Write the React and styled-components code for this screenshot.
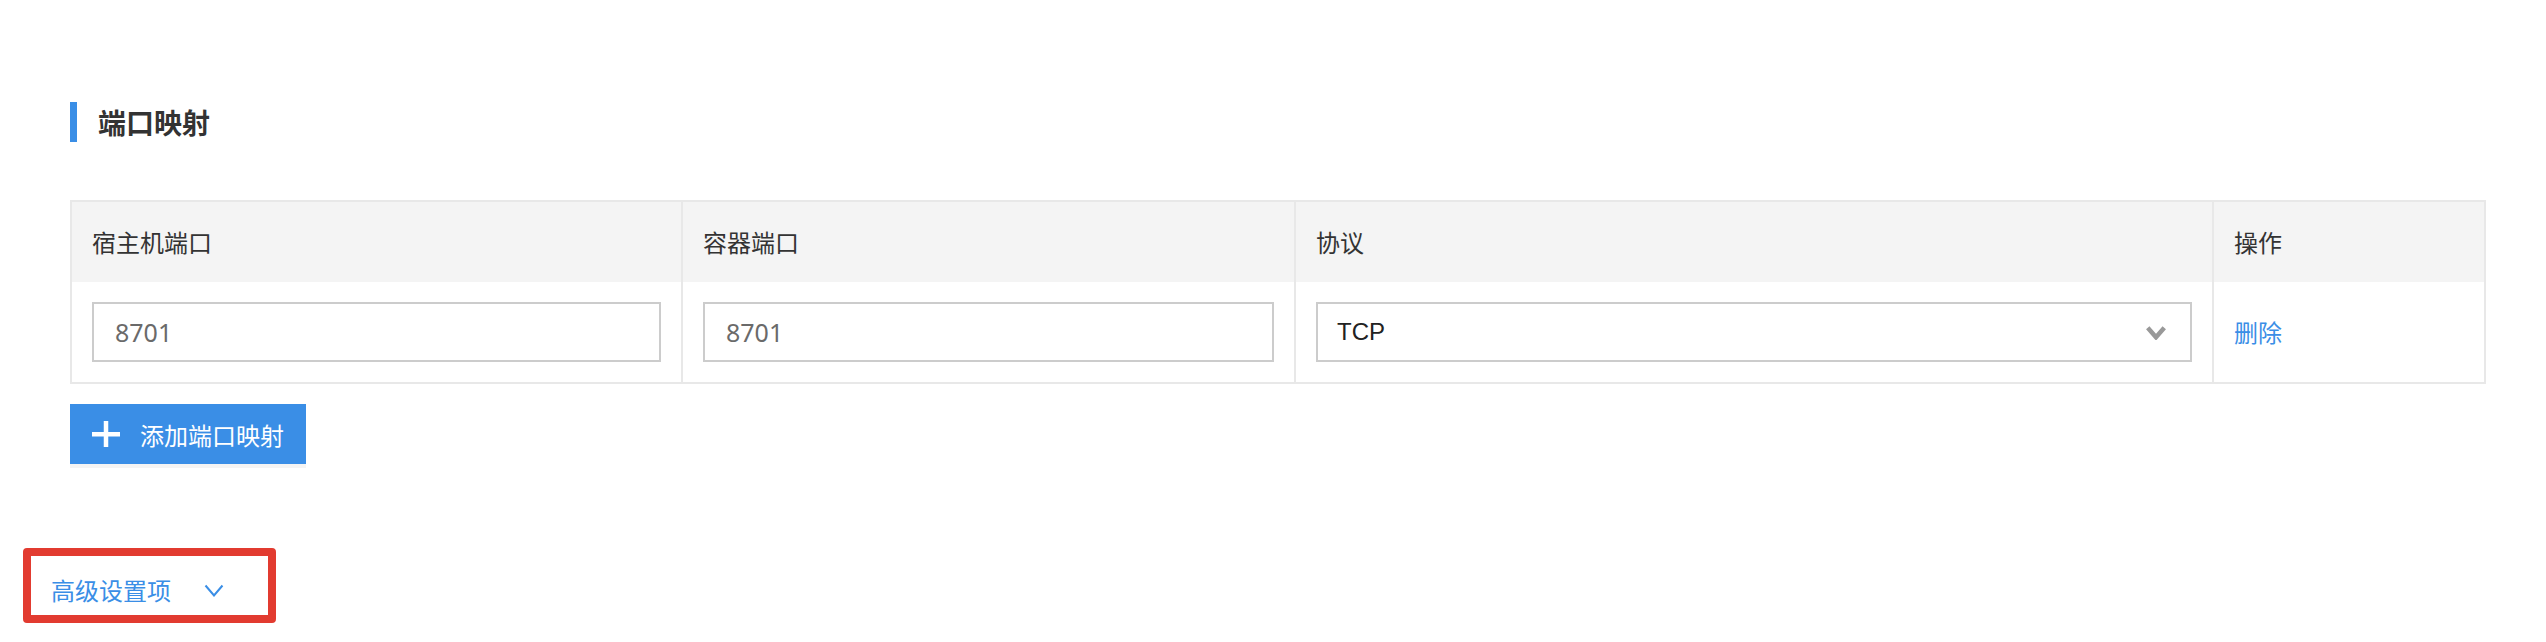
import React from "react";
import styled, { createGlobalStyle } from "styled-components";

const Global = createGlobalStyle`
  html, body { margin: 0; padding: 0; background: #fff; }
  body { font-family: "Noto Sans CJK SC", "Liberation Sans", sans-serif; color: #333; }
  * { box-sizing: border-box; }
`;

const Page = styled.div`
  width: 2546px;
  height: 642px;
  display: flex;
  flex-direction: column;
  overflow: hidden;
`;

const Content = styled.div`
  padding: 102px 60px 0 70px;
  display: flex;
  flex-direction: column;
`;

const SectionTitle = styled.div`
  display: flex;
  align-items: center;
  height: 40px;
  gap: 21px;
  font-size: 28px;
  line-height: 40px;
  font-weight: 700;
  color: #333;
`;

const TitleBar = styled.span`
  width: 7px;
  height: 40px;
  background: #3a8ee6;
`;

const Table = styled.div`
  margin-top: 58px;
  border: 2px solid #e8e8e8;
  display: grid;
  grid-template-columns: 611px 613px 918px 1fr;
`;

const HeadCell = styled.div`
  height: 80px;
  background: #f4f4f4;
  padding: 0 20px;
  display: flex;
  align-items: center;
  font-size: 24px;
  line-height: 30px;
  color: #333;
  border-right: ${(p) => (p.$last ? "none" : "2px solid #e8e8e8")};
`;

const BodyCell = styled.div`
  height: 100px;
  padding: 20px 20px;
  display: flex;
  align-items: center;
  border-right: ${(p) => (p.$last ? "none" : "2px solid #e8e8e8")};
`;

const TextInput = styled.div`
  width: 100%;
  height: 60px;
  border: 2px solid #cccccc;
  padding: 0 21px;
  display: flex;
  align-items: center;
  font-family: "Noto Sans", "Liberation Sans", sans-serif;
  font-size: 25px;
  color: #6a6a6a;
  background: #fff;
`;

const Select = styled(TextInput)`
  justify-content: space-between;
  padding: 0 23px 0 19px;
  font-family: "Liberation Sans", Arial, sans-serif;
  font-size: 24px;
  color: #222;
`;

const LinkText = styled.span`
  font-size: 24px;
  line-height: 30px;
  color: #3a8ee6;
  cursor: pointer;
`;

const AddButton = styled.button`
  margin-top: 20px;
  align-self: flex-start;
  width: 236px;
  height: 60px;
  border: none;
  background: #3a8ee6;
  color: #fff;
  display: flex;
  align-items: center;
  gap: 20px;
  padding: 0 0 0 22px;
  font-family: "Noto Sans CJK SC", sans-serif;
  font-size: 24px;
  box-shadow: 0 4px 0 #f4f4f4;
  cursor: pointer;
`;

const Annotated = styled.div`
  margin: 84px 0 0 23px;
  align-self: flex-start;
  border: 8px solid #e23b30;
  border-radius: 4px;
  width: 253px;
  height: 75px;
  padding: 22px 0 0 20px;
`;

const Advanced = styled.div`
  display: flex;
  align-items: center;
  gap: 33px;
  font-size: 24px;
  line-height: 24px;
  color: #3a8ee6;
  cursor: pointer;
`;

const Chevron = ({ w, h, sw, color }) => (
  <svg width={w} height={h} viewBox={`0 0 ${w} ${h}`} fill="none">
    <polyline
      points={`${sw / 2 + 0.5},${sw / 2 + 0.5} ${w / 2},${h - sw / 2 - 0.5} ${w - sw / 2 - 0.5},${sw / 2 + 0.5}`}
      stroke={color}
      strokeWidth={sw}
      strokeLinecap="butt"
      strokeLinejoin="miter"
    />
  </svg>
);

const PlusIcon = () => (
  <svg width="28" height="26" viewBox="0 0 28 26">
    <rect x="0" y="11" width="28" height="4.5" fill="#fff" />
    <rect x="11.75" y="0" width="4.5" height="26" fill="#fff" />
  </svg>
);

const columns = ["宿主机端口", "容器端口", "协议", "操作"];

export default function App() {
  return (
    <Page>
      <Global />
      <Content>
        <SectionTitle>
          <TitleBar />
          端口映射
        </SectionTitle>
        <Table>
          {columns.map((c, i) => (
            <HeadCell key={c} $last={i === columns.length - 1}>
              {c}
            </HeadCell>
          ))}
          <BodyCell>
            <TextInput>8701</TextInput>
          </BodyCell>
          <BodyCell>
            <TextInput>8701</TextInput>
          </BodyCell>
          <BodyCell>
            <Select>
              TCP
              <Chevron w={22} h={15} sw={4.5} color="#999" />
            </Select>
          </BodyCell>
          <BodyCell $last>
            <LinkText>删除</LinkText>
          </BodyCell>
        </Table>
        <AddButton>
          <PlusIcon />
          添加端口映射
        </AddButton>
      </Content>
      <Annotated>
        <Advanced>
          高级设置项
          <Chevron w={20} h={13} sw={2} color="#3a8ee6" />
        </Advanced>
      </Annotated>
    </Page>
  );
}
